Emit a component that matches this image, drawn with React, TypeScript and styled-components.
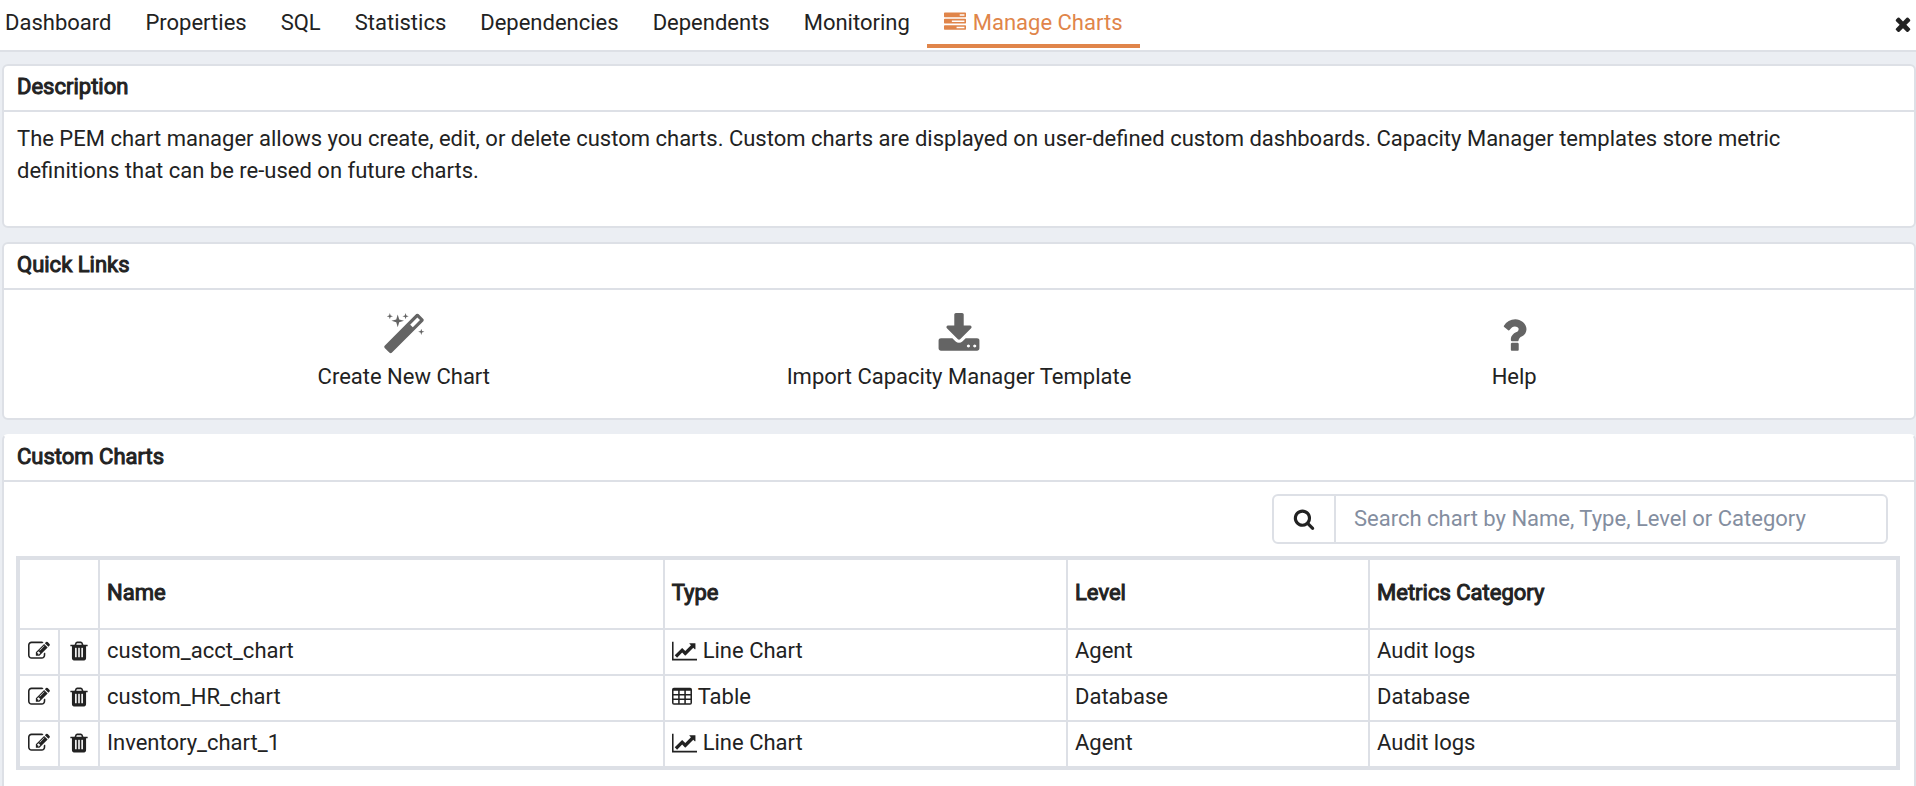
import React, { useState } from "react";
import styled, { createGlobalStyle, css } from "styled-components";

const line = "#dde0e6";
const ink = "#222222";

const GlobalStyle = createGlobalStyle`
  *, *::before, *::after { box-sizing: border-box; }
  html, body { margin: 0; min-height: 100%; background: #ebeef3; }
  body, button, input { font: 400 22px/32px Roboto, sans-serif; color: ${ink}; }
  #root { display: flex; flex-direction: column; min-height: 100vh; }
`;

const Page = styled.div`
  flex: 1;
  display: flex;
  flex-direction: column;
`;

const TabBar = styled.nav`
  display: flex;
  align-items: flex-start;
  height: 52px;
  background: #fff;
  border-bottom: 2px solid ${line};
`;

const Tab = styled.button<{ $active?: boolean }>`
  display: flex;
  align-items: center;
  gap: 7px;
  height: 48px;
  padding: 2px 17px 0;
  border: 0;
  border-bottom: 4px solid ${(p) => (p.$active ? "#e0854a" : "transparent")};
  background: none;
  color: ${(p) => (p.$active ? "#e0854a" : ink)};
  white-space: nowrap;
  cursor: pointer;
  &:first-child { padding-left: 5px; }
  svg { margin-bottom: 2px; }
`;

const CloseButton = styled.button`
  display: flex;
  margin-left: auto;
  padding: 13px 2px 0 0;
  border: 0;
  background: none;
  cursor: pointer;
`;

const Main = styled.main`
  flex: 1;
  display: flex;
  flex-direction: column;
  gap: 14px;
  padding: 12px 0 0 2px;
`;

const Card = styled.section<{ $open?: boolean }>`
  background: #fff;
  border: 2px solid ${line};
  border-radius: 6px;
  ${(p) =>
    p.$open &&
    css`
      flex: 1;
      border-top-color: #fff;
      border-bottom: 0;
      border-radius: 6px 6px 0 0;
    `}
`;

const CardTitle = styled.h2`
  margin: 0;
  padding: 5px 13px 7px;
  border-bottom: 2px solid ${line};
  font-size: 22px;
  line-height: 32px;
  font-weight: 400;
  -webkit-text-stroke: 1px ${ink};
`;

const Description = styled.p`
  margin: 0;
  padding: 11px 92px 39px 13px;
`;

const Links = styled.div`
  display: grid;
  grid-template-columns: repeat(3, 1fr);
  padding: 23px 6.4% 25px;
`;

const QuickLink = styled.a`
  display: flex;
  flex-direction: column;
  align-items: center;
  gap: 4px;
  color: ${ink};
  text-decoration: none;
`;

const QuickIcon = styled.span`
  display: flex;
  color: #646464;
`;

const SearchRow = styled.div`
  display: flex;
  justify-content: flex-end;
  padding: 12px 26px 12px 12px;
`;

const SearchBox = styled.div`
  display: flex;
  flex: 0 1 616px;
  height: 50px;
  border: 2px solid ${line};
  border-radius: 6px;
  overflow: hidden;
`;

const SearchLabel = styled.label`
  display: flex;
  align-items: center;
  justify-content: center;
  flex: 0 0 62px;
  border-right: 2px solid ${line};
`;

const SearchInput = styled.input`
  flex: 1;
  min-width: 0;
  padding: 0 18px;
  border: 0;
  outline: 0;
  background: none;
  &::placeholder { color: #848ea0; opacity: 1; }
`;

const TableWrap = styled.div`
  padding: 0 14px 16px 12px;
`;

const Table = styled.table`
  width: 100%;
  table-layout: fixed;
  border: 4px solid ${line};
  border-spacing: 0;
  border-collapse: separate;
`;

const Col = styled.col<{ $width?: string }>`
  width: ${(p) => p.$width ?? "auto"};
`;

const cell = css`
  padding: 0 7px;
  border: 0 solid ${line};
  border-right-width: 2px;
  border-bottom-width: 2px;
  text-align: left;
  &:last-child { border-right-width: 0; }
`;

const Th = styled.th`
  ${cell}
  height: 70px;
  padding-bottom: 2px;
  font-weight: 400;
  -webkit-text-stroke: 1px ${ink};
`;

const HeadSpacer = styled.td`
  ${cell}
`;

const Td = styled.td`
  ${cell}
  height: 46px;
  padding-bottom: 2px;
  tr:last-child > & { height: 44px; border-bottom-width: 0; }
`;

const ActionCell = styled(Td)`
  padding: 0;
`;

const IconButton = styled.button`
  display: flex;
  align-items: center;
  justify-content: center;
  width: 100%;
  height: 42px;
  padding: 0 0 2px;
  border: 0;
  background: none;
  cursor: pointer;
`;

const TypeLabel = styled.span`
  display: flex;
  align-items: center;
  gap: 6px;
`;

type Glyph = { d: string; w?: number };

const glyphs: Record<string, Glyph> = {
  tasks: {
    d: "M1024 1408h640v-128h-640v128zm-384-512h1024v-128h-1024v128zm640-512h384v-128h-384v128zm512 832v256q0 26-19 45t-45 19h-1664q-26 0-45-19t-19-45v-256q0-26 19-45t45-19h1664q26 0 45 19t19 45zm0-512v256q0 26-19 45t-45 19h-1664q-26 0-45-19t-19-45v-256q0-26 19-45t45-19h1664q26 0 45 19t19 45zm0-512v256q0 26-19 45t-45 19h-1664q-26 0-45-19t-19-45v-256q0-26 19-45t45-19h1664q26 0 45 19t19 45z",
  },
  close: {
    d: "M1490 1322q0 40-28 68l-136 136q-28 28-68 28t-68-28l-294-294-294 294q-28 28-68 28t-68-28l-136-136q-28-28-28-68t28-68l294-294-294-294q-28-28-28-68t28-68l136-136q28-28 68-28t68 28l294 294 294-294q28-28 68-28t68 28l136 136q28 28 28 68t-28 68l-294 294 294 294q28 28 28 68z",
  },
  wand: {
    d: "M1254 581l293-293-107-107-293 293zm447-293q0 27-18 45l-1286 1286q-18 18-45 18t-45-18l-198-198q-18-18-18-45t18-45l1286-1286q18-18 45-18t45 18l198 198q18 18 18 45zm-1351-190l98 30-98 30-30 98-30-98-98-30 98-30 30-98zm350 162l196 60-196 60-60 196-60-196-196-60 196-60 60-196zm930 478l98 30-98 30-30 98-30-98-98-30 98-30 30-98zm-640-640l98 30-98 30-30 98-30-98-98-30 98-30 30-98z",
  },
  download: {
    d: "M1344 1344q0-26-19-45t-45-19-45 19-19 45 19 45 45 19 45-19 19-45zm256 0q0-26-19-45t-45-19-45 19-19 45 19 45 45 19 45-19 19-45zm128-224v320q0 40-28 68t-68 28h-1472q-40 0-68-28t-28-68v-320q0-40 28-68t68-28h465l135 136q58 56 136 56t136-56l136-136h464q40 0 68 28t28 68zm-325-569q17 41-14 70l-448 448q-18 19-45 19t-45-19l-448-448q-31-29-14-70 17-39 59-39h256v-448q0-26 19-45t45-19h256q26 0 45 19t19 45v448h256q42 0 59 39z",
  },
  question: {
    d: "M1088 1256v240q0 16-12 28t-28 12h-240q-16 0-28-12t-12-28v-240q0-16 12-28t28-12h240q16 0 28 12t12 28zm316-600q0 54-15.5 101t-35 76.5-55 59.5-57.5 43.5-61 35.5q-41 23-68.5 65t-27.5 67q0 17-12 32.5t-28 15.5h-240q-15 0-25.5-18.5t-10.5-37.5v-45q0-83 65-156.5t143-108.5q59-27 84-56t25-76q0-42-46.5-74t-107.5-32q-65 0-108 29-35 25-107 115-13 16-31 16-12 0-25-8l-164-125q-13-10-15.5-25t5.5-28q160-266 464-266 80 0 161 31t146 83 106 127.5 41 158.5z",
  },
  search: {
    d: "M1216 832q0-185-131.5-316.5t-316.5-131.5-316.5 131.5-131.5 316.5 131.5 316.5 316.5 131.5 316.5-131.5 131.5-316.5zm512 832q0 52-38 90t-90 38q-54 0-90-38l-343-342q-179 124-399 124-143 0-273.5-55.5t-225-150-150-225-55.5-273.5 55.5-273.5 150-225 225-150 273.5-55.5 273.5 55.5 225 150 150 225 55.5 273.5q0 220-124 399l343 343q37 37 37 90z",
  },
  edit: {
    d: "M888 1184l116-116-152-152-116 116v56h96v96h56zm440-720q-16-16-33 1l-350 350q-17 17-1 33t33-1l350-350q17-17 1-33zm80 594v190q0 119-84.5 203.5t-203.5 84.5h-832q-119 0-203.5-84.5t-84.5-203.5v-832q0-119 84.5-203.5t203.5-84.5h832q63 0 117 25 15 7 18 23 3 17-9 29l-49 49q-14 14-32 8-23-6-45-6h-832q-66 0-113 47t-47 113v832q0 66 47 113t113 47h832q66 0 113-47t47-113v-126q0-13 9-22l64-64q15-15 35-7t20 29zm-96-738l288 288-672 672h-288v-288zm444 132l-92 92-288-288 92-92q28-28 68-28t68 28l152 152q28 28 28 68t-28 68z",
  },
  trash: {
    d: "M704 1376v-704q0-14-9-23t-23-9h-64q-14 0-23 9t-9 23v704q0 14 9 23t23 9h64q14 0 23-9t9-23zm256 0v-704q0-14-9-23t-23-9h-64q-14 0-23 9t-9 23v704q0 14 9 23t23 9h64q14 0 23-9t9-23zm256 0v-704q0-14-9-23t-23-9h-64q-14 0-23 9t-9 23v704q0 14 9 23t23 9h64q14 0 23-9t9-23zm-544-992h448l-48-117q-7-9-17-11h-317q-10 2-17 11zm928 32v64q0 14-9 23t-23 9h-96v948q0 83-47 143.5t-113 60.5h-832q-66 0-113-58.5t-47-141.5v-952h-96q-14 0-23-9t-9-23v-64q0-14 9-23t23-9h309l70-167q15-37 54-63t79-26h320q40 0 79 26t54 63l70 167h309q14 0 23 9t9 23z",
  },
  line: {
    w: 2048,
    d: "M2048 1536v128H0V128h128v1408h1920zM1920 288v435q0 21-19.5 29.5T1865 745l-121-121-633 633q-10 10-23 10t-23-10L832 1024l-416 416-192-192 585-585q10-10 23-10t23 10l233 233 464-464-121-121q-16-16-7.5-35.5T1453 256h435q14 0 23 9t9 23z",
  },
  table: {
    w: 1664,
    d: "M160 128H1504Q1664 128 1664 288V1376Q1664 1536 1504 1536H160Q0 1536 0 1376V288Q0 128 160 128zM128 384V640H512V384zM640 384V640H1024V384zM1152 384V640H1536V384zM128 768V1024H512V768zM640 768V1024H1024V768zM1152 768V1024H1536V768zM128 1152V1408H512V1152zM640 1152V1408H1024V1152zM1152 1152V1408H1536V1152z",
  },
};

function Icon({ name, size = 22 }: { name: string; size?: number }) {
  const { d, w = 1792 } = glyphs[name];
  return (
    <svg
      width={Math.round((size * w) / 1792)}
      height={size}
      viewBox={`0 0 ${w} 1792`}
      fill="currentColor"
      fillRule="evenodd"
      overflow="visible"
      aria-hidden="true"
    >
      <path d={d} />
    </svg>
  );
}

const tabs = [
  "Dashboard",
  "Properties",
  "SQL",
  "Statistics",
  "Dependencies",
  "Dependents",
  "Monitoring",
  "Manage Charts",
];

const quickLinks = [
  { icon: "wand", label: "Create New Chart" },
  { icon: "download", label: "Import Capacity Manager Template" },
  { icon: "question", label: "Help" },
];

const charts = [
  { name: "custom_acct_chart", type: "Line Chart", level: "Agent", category: "Audit logs" },
  { name: "custom_HR_chart", type: "Table", level: "Database", category: "Database" },
  { name: "Inventory_chart_1", type: "Line Chart", level: "Agent", category: "Audit logs" },
];

export default function App() {
  const [active, setActive] = useState("Manage Charts");
  const [query, setQuery] = useState("");
  const rows = charts.filter((c) =>
    Object.values(c).some((v) => v.toLowerCase().includes(query.toLowerCase()))
  );

  return (
    <Page>
      <GlobalStyle />
      <TabBar>
        {tabs.map((tab) => (
          <Tab key={tab} type="button" $active={tab === active} onClick={() => setActive(tab)}>
            {tab === "Manage Charts" && <Icon name="tasks" />}
            {tab}
          </Tab>
        ))}
        <CloseButton type="button" aria-label="Close">
          <Icon name="close" />
        </CloseButton>
      </TabBar>
      <Main>
        <Card>
          <CardTitle>Description</CardTitle>
          <Description>
            The PEM chart manager allows you create, edit, or delete custom charts. Custom charts
            are displayed on user-defined custom dashboards. Capacity Manager templates store metric
            definitions that can be re-used on future charts.
          </Description>
        </Card>
        <Card>
          <CardTitle>Quick Links</CardTitle>
          <Links>
            {quickLinks.map((link) => (
              <QuickLink key={link.label} href="#">
                <QuickIcon>
                  <Icon name={link.icon} size={44} />
                </QuickIcon>
                {link.label}
              </QuickLink>
            ))}
          </Links>
        </Card>
        <Card $open>
          <CardTitle>Custom Charts</CardTitle>
          <SearchRow>
            <SearchBox>
              <SearchLabel htmlFor="chart-search" aria-label="Search charts">
                <Icon name="search" />
              </SearchLabel>
              <SearchInput
                id="chart-search"
                type="text"
                placeholder="Search chart by Name, Type, Level or Category"
                value={query}
                onChange={(e) => setQuery(e.target.value)}
              />
            </SearchBox>
          </SearchRow>
          <TableWrap>
            <Table>
              <colgroup>
                <Col $width="40px" />
                <Col $width="40px" />
                <Col $width="30.1%" />
                <Col $width="21.5%" />
                <Col $width="16.1%" />
                <Col />
              </colgroup>
              <thead>
                <tr>
                  <HeadSpacer colSpan={2} />
                  <Th scope="col">Name</Th>
                  <Th scope="col">Type</Th>
                  <Th scope="col">Level</Th>
                  <Th scope="col">Metrics Category</Th>
                </tr>
              </thead>
              <tbody>
                {rows.map((row) => (
                  <tr key={row.name}>
                    <ActionCell>
                      <IconButton type="button" aria-label={`Edit ${row.name}`}>
                        <Icon name="edit" />
                      </IconButton>
                    </ActionCell>
                    <ActionCell>
                      <IconButton type="button" aria-label={`Delete ${row.name}`}>
                        <Icon name="trash" />
                      </IconButton>
                    </ActionCell>
                    <Td>{row.name}</Td>
                    <Td>
                      <TypeLabel>
                        <Icon name={row.type === "Table" ? "table" : "line"} />
                        {row.type}
                      </TypeLabel>
                    </Td>
                    <Td>{row.level}</Td>
                    <Td>{row.category}</Td>
                  </tr>
                ))}
              </tbody>
            </Table>
          </TableWrap>
        </Card>
      </Main>
    </Page>
  );
}
